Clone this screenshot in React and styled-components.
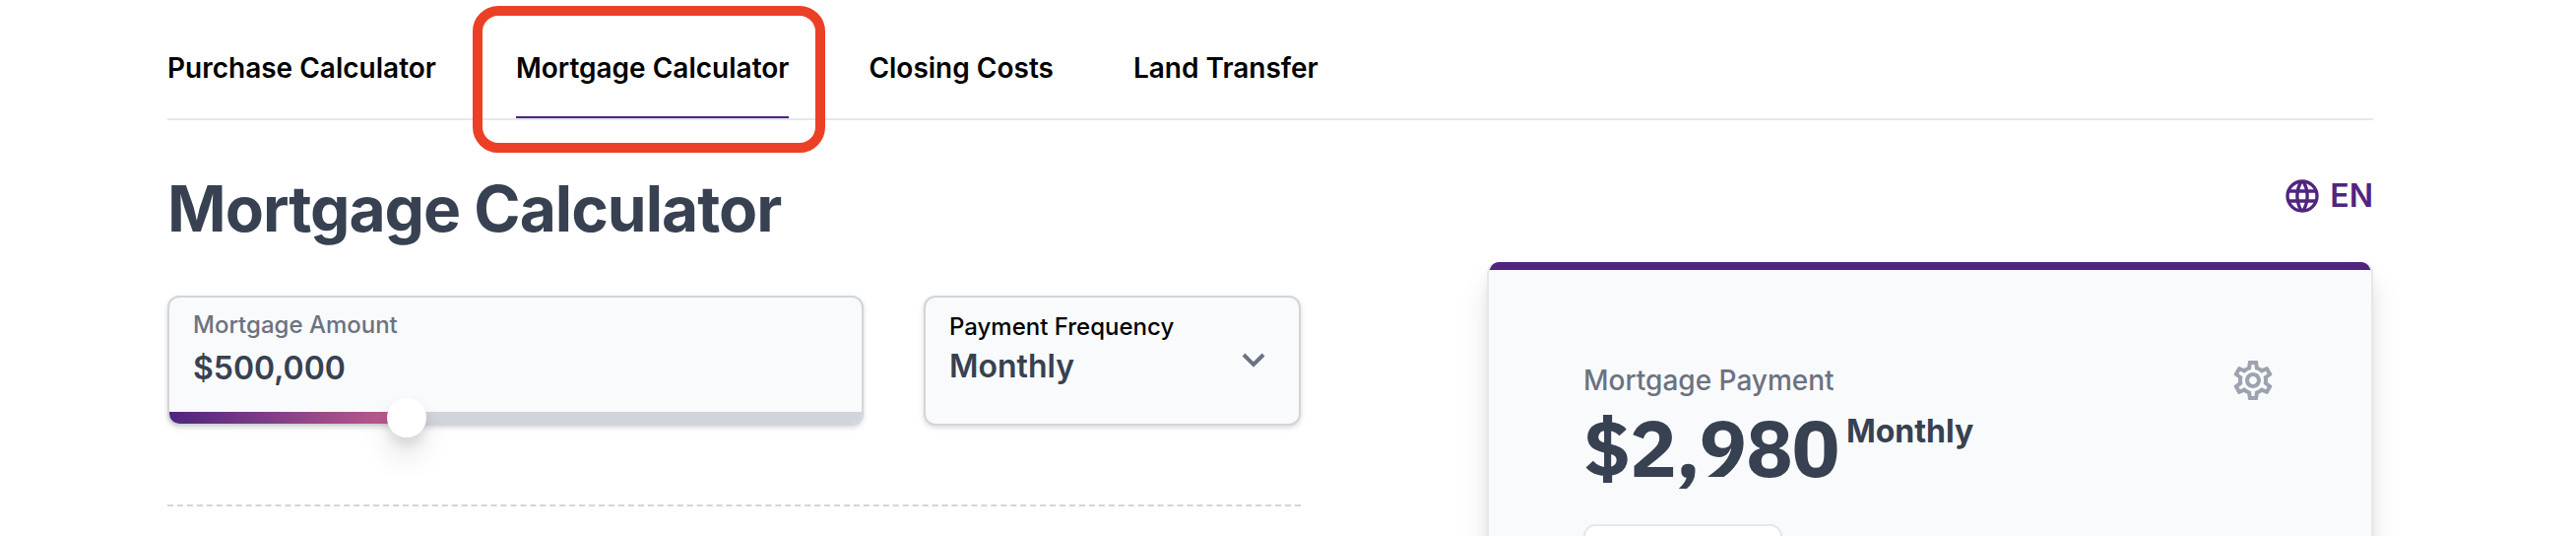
import React, { useState } from 'react';
import styled, { createGlobalStyle } from 'styled-components';
import { MdOutlineSettings } from 'react-icons/md';

const GlobalStyle = createGlobalStyle`
  *, *::before, *::after {
    box-sizing: border-box;
  }

  body {
    margin: 0;
    background: #fff;
    color: #374151;
    font-family: Inter, "Liberation Sans", sans-serif;
    overflow: hidden;
  }

  button, input, select {
    font-family: inherit;
  }
`;

const Page = styled.div`
  padding: 0 206px 0 170px;
`;

const Tabs = styled.nav`
  display: flex;
  gap: 81px;
  padding-top: 40px;
  border-bottom: 2px solid #e5e7eb;
`;

const Tab = styled.a`
  position: relative;
  height: 80px;
  padding-top: 9px;
  border-bottom: 2px solid ${({ $active }) => ($active ? '#4f2580' : 'transparent')};
  color: #000;
  font-size: 28px;
  font-weight: 600;
  line-height: 40px;
  text-decoration: none;
  white-space: nowrap;
`;

const Highlight = styled.span`
  position: absolute;
  inset: -34px -37px -37px -44px;
  border: 10px solid #ec4026;
  border-radius: 26px;
  pointer-events: none;
`;

const Columns = styled.main`
  display: grid;
  grid-template-columns: 1151px 1fr;
  gap: 189px;
`;

const Title = styled.h1`
  margin: 50px 0 0;
  font-size: 64px;
  font-weight: 700;
  letter-spacing: -1px;
  line-height: 80px;
`;

const Fields = styled.form`
  display: grid;
  grid-template-columns: 707px 1fr;
  gap: 61px;
  margin-top: 48px;
  padding-bottom: 80px;
  border-bottom: 2px dashed #d1d5db;
`;

const Field = styled.div`
  position: relative;
  display: flex;
  flex-direction: column;
  height: 132px;
  padding: ${({ $tight }) => ($tight ? '10px 24px' : '8px 24px')};
  border: 2px solid #d1d5db;
  border-radius: 12px;
  background: #f9fafb;
  box-shadow: 0 2px 6px rgba(0, 0, 0, 0.1), 0 2px 4px rgba(0, 0, 0, 0.06);
`;

const FieldLabel = styled.label`
  color: ${({ $dark }) => ($dark ? '#000' : '#6b7280')};
  font-size: 24px;
  font-weight: 500;
  line-height: 40px;
`;

const AmountInput = styled.input`
  width: 100%;
  height: 48px;
  padding: 0;
  border: 0;
  background: transparent;
  color: #374151;
  font-size: 32px;
  font-weight: 600;
  line-height: 48px;
  outline: none;
`;

const Slider = styled.input`
  position: absolute;
  left: 0;
  right: 0;
  bottom: -14px;
  width: 100%;
  height: 40px;
  margin: 0;
  appearance: none;
  background: transparent;

  &::-webkit-slider-runnable-track {
    height: 12px;
    border-radius: 0 0 10px 10px;
    background:
      linear-gradient(90deg, #4f2580, #c05c8e) no-repeat 0 0 / ${({ $fill }) => $fill}% 100%,
      #d1d5db;
  }

  &::-webkit-slider-thumb {
    appearance: none;
    width: 40px;
    height: 40px;
    margin-top: -14px;
    border-radius: 50%;
    background: #fff;
    box-shadow: 0 20px 30px rgba(0, 0, 0, 0.1), 0 8px 12px rgba(0, 0, 0, 0.1);
  }
`;

const FrequencySelect = styled.select`
  width: 100%;
  height: 40px;
  padding: 0;
  border: 0;
  appearance: none;
  background: transparent;
  color: #374151;
  font-size: 32px;
  font-weight: 600;
  line-height: 40px;
  outline: none;
`;

const Chevron = styled.svg`
  position: absolute;
  top: 42px;
  right: 26px;
  width: 40px;
  height: 40px;
  pointer-events: none;
`;

const Side = styled.aside`
  display: flex;
  flex-direction: column;
`;

const Language = styled.button`
  display: flex;
  align-items: center;
  align-self: flex-end;
  gap: 8px;
  margin: 53px 0 43px;
  padding: 0;
  border: 0;
  background: none;
  color: #4f2580;
  font-size: 32px;
  font-weight: 600;
  line-height: 48px;
`;

const Card = styled.section`
  border: 2px solid #e5e7eb;
  border-top: 0;
  border-radius: 12px;
  background: #f9fafb;
  box-shadow: 0 20px 30px rgba(0, 0, 0, 0.1), 0 8px 12px rgba(0, 0, 0, 0.05);
  overflow: hidden;
`;

const CardBar = styled.div`
  height: 8px;
  background: #4f2580;
`;

const CardBody = styled.div`
  padding: 88px 96px;
`;

const CardHead = styled.div`
  display: flex;
  align-items: center;
  justify-content: space-between;
  color: #6b7280;
  font-size: 28px;
  font-weight: 500;
  line-height: 48px;
`;

const SettingsButton = styled.button`
  display: flex;
  padding: 0;
  border: 0;
  background: none;
  color: #9ca3af;
`;

const Payment = styled.div`
  display: flex;
  gap: 8px;
`;

const Amount = styled.span`
  font-family: "IBM Plex Sans", "Noto Sans CJK JP", sans-serif;
  font-size: 80px;
  font-weight: 700;
  letter-spacing: -1px;
  line-height: 88px;
`;

const Period = styled.span`
  padding-top: 4px;
  font-size: 32px;
  font-weight: 700;
  line-height: 48px;
`;

const TermBox = styled.div`
  width: 202px;
  height: 80px;
  margin-top: 34px;
  border: 2px solid #e5e7eb;
  border-radius: 12px;
  background: #fff;
`;

const tabs = ['Purchase Calculator', 'Mortgage Calculator', 'Closing Costs', 'Land Transfer'];
const MAX_AMOUNT = 1500000;

const GlobeIcon = () => (
  <svg width="40" height="40" viewBox="0 0 24 24" fill="none" stroke="currentColor" strokeWidth="2" aria-hidden="true">
    <path d="M21 12a9 9 0 11-18 0 9 9 0 0118 0z" />
    <path d="M3.6 9h16.8M3.6 15h16.8M11.5 3a17 17 0 000 18M12.5 3a17 17 0 010 18" />
  </svg>
);

const App = () => {
    const [amount, setAmount] = useState(500000);
    const [frequency, setFrequency] = useState('Monthly');

    const handleAmount = (e) => {
        const value = Number(e.target.value.replace(/\D/g, ''))
        setAmount(Math.min(value, MAX_AMOUNT))
    }

    return (
        <Page>
            <GlobalStyle />
            <Tabs>
                {tabs.map((tab) => (
                    <Tab key={tab} href="#" $active={tab === 'Mortgage Calculator'}>
                        {tab}
                        {tab === 'Mortgage Calculator' && <Highlight />}
                    </Tab>
                ))}
            </Tabs>
            <Columns>
                <div>
                    <Title>Mortgage Calculator</Title>
                    <Fields>
                        <Field>
                            <FieldLabel htmlFor="amount">Mortgage Amount</FieldLabel>
                            <AmountInput id="amount" value={`$${amount.toLocaleString('en-US')}`} onChange={handleAmount} />
                            <Slider
                                type="range"
                                aria-label="Mortgage Amount"
                                min="0"
                                max={MAX_AMOUNT}
                                step="1000"
                                value={amount}
                                $fill={(amount / MAX_AMOUNT) * 100}
                                onChange={handleAmount}
                            />
                        </Field>
                        <Field $tight>
                            <FieldLabel htmlFor="frequency" $dark>Payment Frequency</FieldLabel>
                            <FrequencySelect id="frequency" value={frequency} onChange={(e) => setFrequency(e.target.value)}>
                                <option>Monthly</option>
                                <option>Bi-Weekly</option>
                                <option>Weekly</option>
                            </FrequencySelect>
                            <Chevron viewBox="0 0 20 20" fill="none" stroke="#6b7280" strokeWidth="2">
                                <path d="M5 8l5 5 5-5" />
                            </Chevron>
                        </Field>
                    </Fields>
                </div>
                <Side>
                    <Language type="button"><GlobeIcon />EN</Language>
                    <Card>
                        <CardBar />
                        <CardBody>
                            <CardHead>
                                <span>Mortgage Payment</span>
                                <SettingsButton type="button" aria-label="Settings"><MdOutlineSettings size={48} /></SettingsButton>
                            </CardHead>
                            <Payment>
                                <Amount>$2,980</Amount>
                                <Period>{frequency}</Period>
                            </Payment>
                            <TermBox />
                        </CardBody>
                    </Card>
                </Side>
            </Columns>
        </Page>
    );
};

export default App;
